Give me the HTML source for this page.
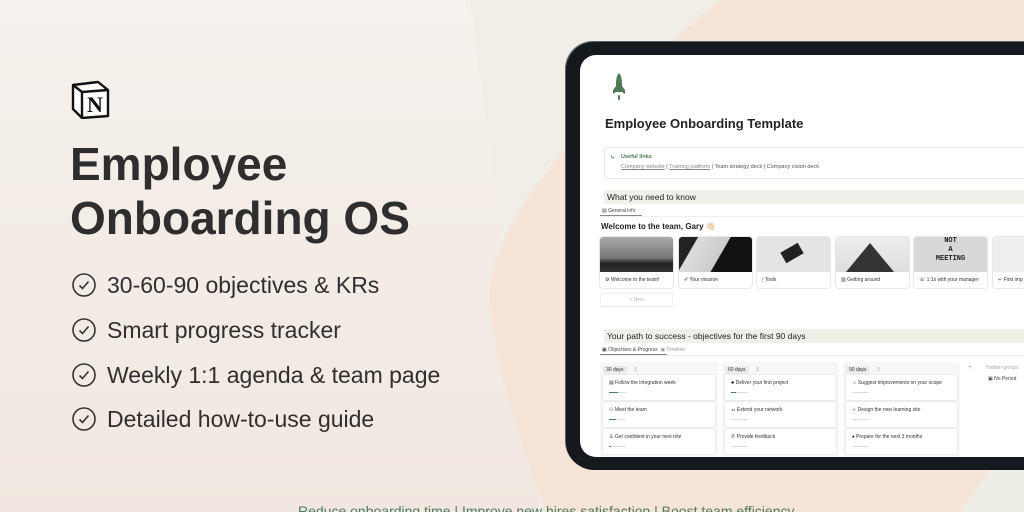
<!DOCTYPE html>
<html><head><meta charset="utf-8"><style>
*{margin:0;padding:0;box-sizing:border-box}
html,body{width:1024px;height:512px;overflow:hidden}
body{position:relative;font-family:"Liberation Sans",sans-serif;background:#f4ede7}
.abs{position:absolute}
.t{position:absolute;white-space:nowrap}
.li{position:absolute;left:72px;width:420px;height:24px;font-size:23px;color:#2f2f2f;white-space:nowrap}
.li .c{position:absolute;left:0;top:0;width:24px;height:24px}
.li span{position:absolute;left:35px;top:0;line-height:24px;white-space:nowrap}
.card{position:absolute;top:182px;width:73px;height:51px;border-radius:3px;background:#fff;box-shadow:0 0 0 1px #e8e8e8;overflow:hidden}
.card .im{height:35px}
.card .cap{font-size:5px;color:#333;padding:5px 0 0 5px;white-space:nowrap}
.col{position:absolute;top:362px;height:100px;background:#f7f7f5;border-radius:3px}
.bc{position:absolute;left:3px;right:3px;height:25px;background:#fff;border-radius:2px;box-shadow:0 0 0 1px #ececec}
.bc .n{position:absolute;left:6px;top:5px;font-size:5px;color:#333;white-space:nowrap}
.bc .b{position:absolute;left:6px;top:17px;width:17px;height:1px;background:#ddd}
.bc .b i{display:block;height:1px;background:#4e7c59}
.tag{position:absolute;top:4px;left:3px;font-size:5px;color:#333;background:#ebebe9;padding:1px 3px}
</style></head><body>
<svg class="abs" style="left:0;top:0" width="1024" height="512">
<defs><linearGradient id="g" x1="0" y1="0" x2="0" y2="1"><stop offset="0" stop-color="#f5f1ec"/><stop offset="1" stop-color="#f1e7e0"/></linearGradient></defs>
<rect width="1024" height="512" fill="url(#g)"/>
<path d="M470,0 L1024,0 L1024,512 L540,512 Z" fill="#f0eee6"/>
<path d="M720,0 L1024,0 L1024,512 L545,512 C530,460 495,380 490,300 C485,220 600,100 720,0 Z" fill="#f6e4d7"/>
<path d="M960,512 C990,470 1010,440 1024,420 L1024,512 Z" fill="#efeee6"/>
</svg>
<svg class="abs" style="left:71px;top:79px" width="40" height="40" viewBox="0 0 40 40">
<path d="M2,6 L27,3 L37,11 L37,37 L11,39 L2,30 Z" fill="#fff" stroke="#111" stroke-width="2.4" stroke-linejoin="round"/>
<path d="M2,6 L11,13 L37,11" fill="none" stroke="#111" stroke-width="2.4"/>
<path d="M11,13 L11,39" stroke="#111" stroke-width="2.4"/>
<text x="24" y="33" font-family="Liberation Serif" font-weight="bold" font-size="22" text-anchor="middle" fill="#111">N</text>
</svg>
<div class="t" style="left:70px;top:137px;font-size:46px;font-weight:bold;color:#2e2e2e;line-height:54px">Employee<br>Onboarding OS</div>
<div class="li" style="top:273px"><svg class="c" viewBox="0 0 24 24"><circle cx="12" cy="12" r="11" fill="none" stroke="#333" stroke-width="1.6"/><path d="M7.5,12.5 L10.5,15.5 L16.5,8.5" fill="none" stroke="#333" stroke-width="1.6"/></svg><span>30-60-90 objectives &amp; KRs</span></div>
<div class="li" style="top:318px"><svg class="c" viewBox="0 0 24 24"><circle cx="12" cy="12" r="11" fill="none" stroke="#333" stroke-width="1.6"/><path d="M7.5,12.5 L10.5,15.5 L16.5,8.5" fill="none" stroke="#333" stroke-width="1.6"/></svg><span>Smart progress tracker</span></div>
<div class="li" style="top:363px"><svg class="c" viewBox="0 0 24 24"><circle cx="12" cy="12" r="11" fill="none" stroke="#333" stroke-width="1.6"/><path d="M7.5,12.5 L10.5,15.5 L16.5,8.5" fill="none" stroke="#333" stroke-width="1.6"/></svg><span>Weekly 1:1 agenda &amp; team page</span></div>
<div class="li" style="top:407px"><svg class="c" viewBox="0 0 24 24"><circle cx="12" cy="12" r="11" fill="none" stroke="#333" stroke-width="1.6"/><path d="M7.5,12.5 L10.5,15.5 L16.5,8.5" fill="none" stroke="#333" stroke-width="1.6"/></svg><span>Detailed how-to-use guide</span></div>
<div class="t" style="left:298px;top:503px;font-size:14px;color:#4f7a58">Reduce onboarding time | Improve new hires satisfaction | Boost team efficiency</div>

<div class="abs" style="left:566px;top:42px;width:500px;height:428px;background:#15181c;border-radius:28px;box-shadow:-1px -1px 0 #5a6270"></div>
<div class="abs" style="left:580px;top:55px;width:480px;height:402px;background:#fff;border-radius:16px;overflow:hidden">
 <svg class="abs" style="left:32px;top:18px" width="14" height="28" viewBox="0 0 14 28"><path d="M7,0 C10,3 10,8 10,13 L13,17 L13,21 L10,19 L4,19 L1,21 L1,17 L4,13 C4,8 4,3 7,0 Z" fill="#4e7c59"/><rect x="6" y="22" width="2" height="5" rx="1" fill="#4e7c59"/></svg>
 <div class="t" style="left:25px;top:61px;font-size:13px;font-weight:bold;color:#222">Employee Onboarding Template</div>
 <div class="abs" style="left:24px;top:92px;width:470px;height:32px;border:1px solid #e6e6e6;border-radius:2px"></div>
 <div class="t" style="left:30px;top:99px;font-size:6px;color:#4e7c59">↳</div>
 <div class="t" style="left:41px;top:99px;font-size:5.5px;font-weight:bold;color:#4e7c59">Useful links</div>
 <div class="t" style="left:41px;top:109px;font-size:5.5px;color:#555"><span style="color:#888;text-decoration:underline">Company website</span> | <span style="color:#888;text-decoration:underline">Training platform</span> | Team strategy deck | Company vision deck</div>
 <div class="abs" style="left:24px;top:135px;width:470px;height:14px;background:#eef1ea"></div>
 <div class="t" style="left:27px;top:137px;font-size:8.5px;color:#222">What you need to know</div>
 <div class="t" style="left:22px;top:153px;font-size:5px;color:#444">▤ General info</div>
 <div class="abs" style="left:20px;top:160px;width:42px;height:1px;background:#888"></div>
 <div class="abs" style="left:20px;top:161px;width:460px;height:1px;background:#eee"></div>
 <div class="t" style="left:21px;top:167px;font-size:8px;font-weight:bold;color:#222">Welcome to the team, Gary 👋🏻</div>
 <div class="card" style="left:20px"><div class="im" style="background:linear-gradient(#aaa,#777 60%,#222 75%,#333)"></div><div class="cap">⚙ Welcome to the team!</div></div>
 <div class="card" style="left:99px"><div class="im" style="background:linear-gradient(120deg,#222 20%,#ddd 21%,#ccc 55%,#111 56%)"></div><div class="cap">✐ Your mission</div></div>
 <div class="card" style="left:177px"><div class="im" style="background:#e4e4e4;position:relative"><div style="position:absolute;left:25px;top:10px;width:20px;height:12px;background:#222;transform:rotate(-30deg)"></div></div><div class="cap">🕯 Tools</div></div>
 <div class="card" style="left:256px"><div class="im" style="background:linear-gradient(#eee,#ddd);position:relative"><div style="position:absolute;left:10px;top:6px;width:0;height:0;border-left:24px solid transparent;border-right:24px solid transparent;border-bottom:29px solid #333"></div></div><div class="cap">▥ Getting around</div></div>
 <div class="card" style="left:334px"><div class="im" style="background:#d8d8d6;font:bold 7px 'Liberation Mono';color:#222;text-align:center;line-height:9px">NOT<br>A<br>MEETING</div><div class="cap">☏ 1:1s with your manager</div></div>
 <div class="card" style="left:413px"><div class="im" style="background:#eee"></div><div class="cap">↵ First imp</div></div>
 <div class="abs" style="left:20px;top:238px;width:73px;height:14px;border:1px solid #f0f0f0;font-size:5px;color:#bbb;text-align:center;line-height:12px">+ New</div>
 <div class="abs" style="left:24px;top:274px;width:470px;height:14px;background:#eef1ea"></div>
 <div class="t" style="left:27px;top:276px;font-size:8.5px;color:#222">Your path to success - objectives for the first 90 days</div>
 <div class="t" style="left:22px;top:292px;font-size:5px;color:#444">▣ Objectives &amp; Progress &nbsp;<span style="color:#999">▣ Timeline</span></div>
 <div class="abs" style="left:20px;top:299px;width:67px;height:1px;background:#888"></div>
 <div class="abs" style="left:20px;top:300px;width:460px;height:1px;background:#eee"></div>
 <div class="col" style="left:20px;width:118px;top:307px"><div class="tag">30 days</div><span class="t" style="left:34px;top:5px;font-size:5px;color:#aaa">3</span>
  <div class="bc" style="top:13px"><div class="n">▤ Follow the integration week</div><div class="b"><i style="width:50%"></i></div></div>
  <div class="bc" style="top:40px"><div class="n">⚇ Meet the team</div><div class="b"><i style="width:40%"></i></div></div>
  <div class="bc" style="top:67px"><div class="n">♙ Get confident in your new role</div><div class="b"><i style="width:10%"></i></div></div></div>
 <div class="col" style="left:142px;width:117px;top:307px"><div class="tag">60 days</div><span class="t" style="left:34px;top:5px;font-size:5px;color:#aaa">3</span>
  <div class="bc" style="top:13px"><div class="n">♣ Deliver your first project</div><div class="b"><i style="width:30%"></i></div></div>
  <div class="bc" style="top:40px"><div class="n">⚏ Extend your network</div><div class="b"></div></div>
  <div class="bc" style="top:67px"><div class="n">✆ Provide feedback</div><div class="b"></div></div></div>
 <div class="col" style="left:263px;width:117px;top:307px"><div class="tag">90 days</div><span class="t" style="left:34px;top:5px;font-size:5px;color:#aaa">3</span>
  <div class="bc" style="top:13px"><div class="n">☼ Suggest improvements on your scope</div><div class="b"></div></div>
  <div class="bc" style="top:40px"><div class="n">⊹ Design the new learning site</div><div class="b"></div></div>
  <div class="bc" style="top:67px"><div class="n">♠ Prepare for the next 3 months</div><div class="b"></div></div></div>
 <div class="t" style="left:388px;top:309px;font-size:7px;color:#aaa">+</div>
 <div class="t" style="left:406px;top:310px;font-size:5px;color:#aaa">Hidden groups</div>
 <div class="t" style="left:408px;top:321px;font-size:5px;color:#444">▣ No Period</div>
</div>
</body></html>
